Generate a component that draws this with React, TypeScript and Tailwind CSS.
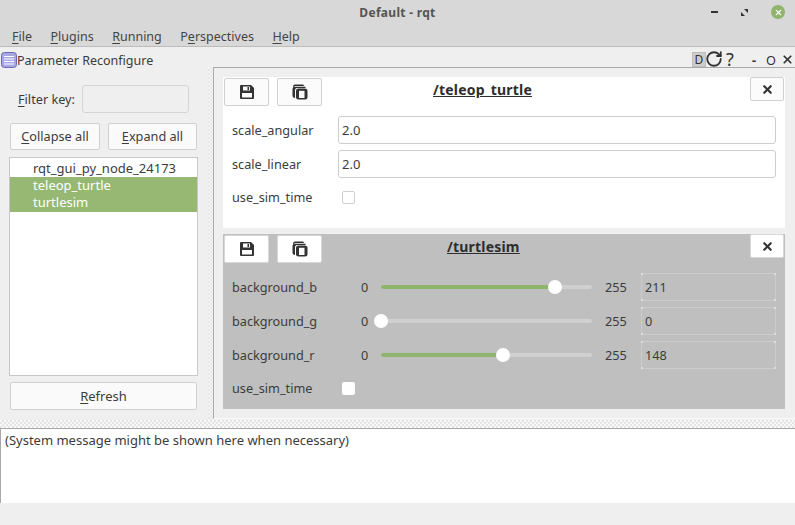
import React from 'react';
import { RotateCw, X } from 'lucide-react';

const font = { fontFamily: '"Noto Sans", sans-serif' };

function Mnemonic({ pre = '', ch, post }: { pre?: string; ch: string; post: string }) {
  return (
    <span>
      {pre}
      <span className="underline underline-offset-2 decoration-1">{ch}</span>
      {post}
    </span>
  );
}

function SaveIcon({ fill }: { fill: string }) {
  return (
    <svg width="14" height="14" viewBox="0 0 14 14">
      <path d="M1 0h10l3 3v10a1 1 0 0 1-1 1H1a1 1 0 0 1-1-1V1a1 1 0 0 1 1-1z" fill="#333" />
      <path d="M3 1.5h7v4H3z" fill={fill} />
      <path d="M7.5 2h1.5v3H7.5z" fill="#333" />
      <path d="M2 8h10v4.5H2z" fill={fill} />
    </svg>
  );
}

function CopyIcon({ fill }: { fill: string }) {
  return (
    <svg width="16" height="16" viewBox="0 0 16 16">
      <path d="M3 0.5h8l1.5 1.5H3.5C2.5 2 2 2.6 2 3.5H1C1 1.5 1.7 0.5 3 0.5z" fill="#333" />
      <path d="M3 2.8h10.5V4H5C3.8 4 3 5 3 6.2V14C1.5 14 0.5 13 0.5 11.5V5.5C0.5 3.8 1.3 2.8 3 2.8z" fill="#333" />
      <rect x="4" y="4.5" width="11.5" height="11" rx="2.5" fill="#333" />
      <rect x="7" y="6.8" width="5.5" height="7.2" fill={fill} />
    </svg>
  );
}

function PanelHeader({ title, active, titleMargin }: { title: string; active?: boolean; titleMargin: string }) {
  const btn = active
    ? 'bg-white border-[#d8d8d8]'
    : 'bg-[#fbfbfb] border-[#d0d0d0]';
  const fill = active ? '#ffffff' : '#fbfbfb';
  return (
    <div className="flex items-start h-[29px] pl-px pr-px">
      <div className={`w-[45px] h-[28px] mt-px border rounded-[2px] flex items-center justify-center ${btn}`}>
        <SaveIcon fill={fill} />
      </div>
      <div className={`w-[45px] h-[28px] mt-px ml-2 border rounded-[2px] flex items-center justify-center ${btn}`}>
        <CopyIcon fill={fill} />
      </div>
      <span className={`font-bold underline text-[14px] tracking-[0.2px] leading-[26px] text-[#2e2e2e] ${titleMargin}`}>{title}</span>
      <div className={`ml-auto w-[34px] h-[24px] border rounded-[2px] flex items-center justify-center ${btn}`}>
        <X size={13} strokeWidth={4} color="#333" />
      </div>
    </div>
  );
}

function TextRow({ label, value }: { label: string; value: string }) {
  return (
    <div className="flex items-center h-[28px] pl-[9px]">
      <span className="w-[106px] pt-[2px]">{label}</span>
      <div className="w-[438px] h-[28px] bg-white border border-[#cdcdcd] rounded-[3px] px-[3px] leading-[26px] text-[13px]">{value}</div>
    </div>
  );
}

function SliderRow({ label, value, pct }: { label: string; value: string; pct: number }) {
  return (
    <div className="flex items-center h-[28px] pl-[9px]">
      <span className="w-[129px] pt-[2px]">{label}</span>
      <span className="w-[20px] pt-[2px]">0</span>
      <div className="relative w-[211px] h-[4px] rounded-full bg-[#d0d0d0]">
        <div className="h-full rounded-full bg-[#8fb46c]" style={{ width: `${pct}%` }} />
        <div
          className="absolute top-[-5px] w-[14px] h-[14px] -ml-[7px] rounded-full bg-white"
          style={{ left: `${pct}%` }}
        />
      </div>
      <span className="ml-[13px] w-[36px] pt-[2px]">255</span>
      <div className="relative w-[135px] h-[28px] border border-[#cbcbcb] px-[3px] leading-[27px]">
        {value}
        <span className="absolute -left-px -top-px w-[2px] h-[2px] bg-[#dedede]" />
        <span className="absolute -right-px -top-px w-[2px] h-[2px] bg-[#dedede]" />
        <span className="absolute -left-px -bottom-px w-[2px] h-[2px] bg-[#dedede]" />
        <span className="absolute -right-px -bottom-px w-[2px] h-[2px] bg-[#dedede]" />
      </div>
    </div>
  );
}

function Checkbox({ active }: { active?: boolean }) {
  return (
    <div
      className={`w-[13px] h-[13px] rounded-[2px] ${active ? 'bg-white' : 'bg-white border border-[#cfcfcf]'}`}
    />
  );
}

const dotted =
  'bg-[repeating-conic-gradient(#e4e4e4_0%_25%,#f8f8f8_0%_50%)] bg-[length:4px_4px]';

export default function App() {
  return (
    <div
      className="w-[795px] h-[525px] overflow-hidden flex flex-col bg-[#efefef] text-[12.7px] text-[#3c3c3c]"
      style={font}
    >
      {/* window title + menu */}
      <div className="h-[47px] shrink-0 bg-[#d8d8d8] border-b border-[#bcbcbc] flex flex-col">
        <div className="relative h-[26px] flex items-center justify-center">
          <span className="font-bold text-[12px] text-[#555] tracking-[0.3px]">Default - rqt</span>
          <div className="absolute right-[10px] top-[5px] flex items-center">
            <div className="w-[7px] h-[2px] bg-[#333] mr-[23px]" />
            <svg width="7" height="7" viewBox="0 0 7 7" className="mr-[23px]">
              <path d="M3 0h4v4zM0 3l4 4H0z" fill="#333" />
            </svg>
            <div className="w-[14px] h-[14px] rounded-full bg-[#8fb46c] flex items-center justify-center">
              <X size={9} strokeWidth={3} color="#fff" />
            </div>
          </div>
        </div>
        <div className="flex pl-[12px] gap-[18.5px] h-[20px] pt-[2px] items-center text-[12.5px] text-[#444]">
          <Mnemonic ch="F" post="ile" />
          <Mnemonic ch="P" post="lugins" />
          <Mnemonic ch="R" post="unning" />
          <Mnemonic pre="P" ch="e" post="rspectives" />
          <Mnemonic ch="H" post="elp" />
        </div>
      </div>

      {/* dock widget title */}
      <div className="relative h-[20px] shrink-0 flex items-end">
        <svg width="16" height="16" viewBox="0 0 16 16" className="ml-px -mb-px">
          <rect x="0.5" y="0.5" width="15" height="15" rx="3" fill="#a9a6e6" stroke="#6d6ab0" />
          <path d="M3 4.5h10M3 7h10M3 9.5h10M3 12h10" stroke="#fff" strokeWidth="1" />
        </svg>
        <span className="text-[12.5px] leading-[13px]">Parameter Reconfigure</span>
        <div className="ml-auto flex items-end text-[#333]">
          <div className="w-[14px] h-[15px] bg-[#cdcdcd] border border-[#bdbdbd] text-[12px] leading-[13px] text-center">D</div>
          <RotateCw size={18} strokeWidth={2.4} className="-ml-px -mb-px" color="#333" />
          <span className="ml-[3px] text-[18px] leading-[15px] w-[12px]">?</span>
          <span className="ml-[14px] w-[8px] font-bold leading-[14px]">-</span>
          <span className="ml-[3px] w-[16px] leading-[14px] text-center">O</span>
          <X size={13} strokeWidth={3.2} color="#333" className="ml-[1.5px] mr-[1.5px] mb-px" />
        </div>
      </div>

      <div className="flex h-[353px] shrink-0">
        {/* node list side */}
        <div className="w-[208px] shrink-0 pl-[9px] pr-[10px] flex flex-col">
          <div className="flex items-center h-[28px] mt-[18px] pl-[9px]">
            <span className="w-[64px] pt-[2px]"><Mnemonic ch="F" post="ilter key:" /></span>
            <div className="w-[107px] h-[28px] bg-[#efefef] border border-[#d4d4d4] rounded-[3px]" />
          </div>
          <div className="flex mt-[10px] gap-2 pl-px">
            <div className="w-[90px] h-[27px] pt-px bg-[#fafafa] border border-[#d0d0d0] rounded-[2px] flex items-center justify-center">
              <Mnemonic ch="C" post="ollapse all" />
            </div>
            <div className="w-[89px] h-[27px] pt-px bg-[#fafafa] border border-[#d0d0d0] rounded-[2px] flex items-center justify-center">
              <Mnemonic ch="E" post="xpand all" />
            </div>
          </div>
          <div className="mt-[7px] h-[219px] w-[189px] bg-white border border-[#c8c8c8] pt-[2px] flex flex-col text-[13px]">
            <div className="h-[17px] pl-[23px] leading-[17px]">rqt_gui_py_node_24173</div>
            <div className="h-[17px] pl-[23px] leading-[17px] bg-[#97b873] text-white">teleop_turtle</div>
            <div className="h-[18px] pl-[23px] leading-[17px] bg-[#97b873] text-white">turtlesim</div>
          </div>
          <div className="mt-[6px] ml-px w-[187px] h-[28px] pt-px bg-[#fafafa] border border-[#d0d0d0] rounded-[2px] flex items-center justify-center text-[13px]">
            <Mnemonic ch="R" post="efresh" />
          </div>
        </div>

        <div className={`w-[5px] shrink-0 ${dotted}`} />

        {/* reconfigure panels */}
        <div className="flex-1 h-[352px] border-l border-t border-b border-l-[#a9a9a9] border-t-[#a9a9a9] border-b-[#fafafa] pl-[9px] pt-[9px] pr-[10px] flex flex-col">
          <div className="h-[151px] bg-white">
            <PanelHeader title="/teleop_turtle" titleMargin="ml-[111px]" />
            <div className="mt-[10px] flex flex-col gap-[6px]">
              <TextRow label="scale_angular" value="2.0" />
              <TextRow label="scale_linear" value="2.0" />
            </div>
            <div className="flex items-center h-[28px] mt-[5px] pl-[9px]">
              <span className="w-[110px] pt-[2px]">use_sim_time</span>
              <Checkbox />
            </div>
          </div>
          <div className="h-[175px] mt-[6px] bg-[#bfbfbf]">
            <PanelHeader title="/turtlesim" active titleMargin="ml-[125px]" />
            <div className="mt-[10px] flex flex-col gap-[6px]">
              <SliderRow label="background_b" value="211" pct={82.7} />
              <SliderRow label="background_g" value="0" pct={0} />
              <SliderRow label="background_r" value="148" pct={58} />
            </div>
            <div className="flex items-center h-[28px] mt-[5px] pl-[9px]">
              <span className="w-[110px] pt-[2px]">use_sim_time</span>
              <Checkbox active />
            </div>
          </div>
        </div>
      </div>

      <div className={`h-[8px] shrink-0 ${dotted}`} />

      <div className="h-[75px] shrink-0 bg-white border-l border-t border-[#a9a9a9] pl-[4px] pt-[2px] text-[13px]">
        (System message might be shown here when necessary)
      </div>
    </div>
  );
}
